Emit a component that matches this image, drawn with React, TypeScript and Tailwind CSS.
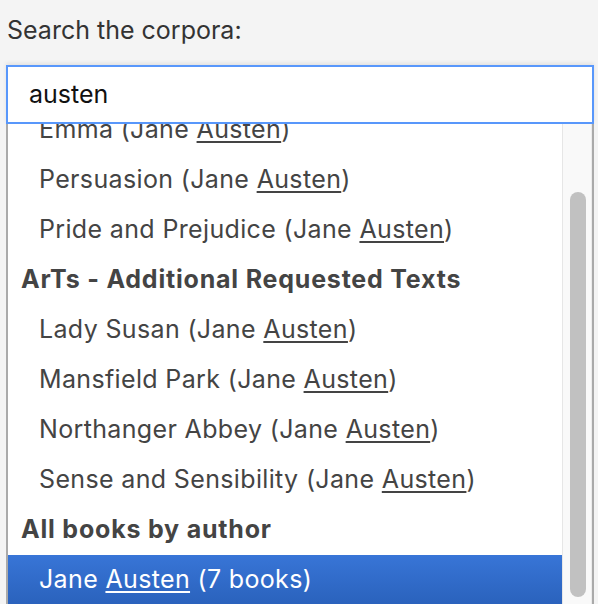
import React from 'react';

type Row = { kind: 'group' | 'item'; before?: string; match?: string; after?: string; label?: string; active?: boolean };

const rows: Row[] = [
  { kind: 'item', before: 'Emma (Jane ', match: 'Austen', after: ')' },
  { kind: 'item', before: 'Persuasion (Jane ', match: 'Austen', after: ')' },
  { kind: 'item', before: 'Pride and Prejudice (Jane ', match: 'Austen', after: ')' },
  { kind: 'group', label: 'ArTs - Additional Requested Texts' },
  { kind: 'item', before: 'Lady Susan (Jane ', match: 'Austen', after: ')' },
  { kind: 'item', before: 'Mansfield Park (Jane ', match: 'Austen', after: ')' },
  { kind: 'item', before: 'Northanger Abbey (Jane ', match: 'Austen', after: ')' },
  { kind: 'item', before: 'Sense and Sensibility (Jane ', match: 'Austen', after: ')' },
  { kind: 'group', label: 'All books by author' },
  { kind: 'item', before: 'Jane ', match: 'Austen', after: ' (7 books)', active: true },
];

const ResultRow: React.FC<{ row: Row }> = ({ row }) => {
  if (row.kind === 'group') {
    return (
      <li className="h-[50px] flex items-center pl-[13px] font-bold text-[#444] tracking-[0.8px]">
        {row.label}
      </li>
    );
  }
  return (
    <li
      className={
        row.active
          ? 'h-[50px] flex items-center pl-[31px] tracking-[0.35px] text-white bg-gradient-to-b from-[#3875d7] to-[#2a62bc]'
          : 'h-[50px] flex items-center pl-[31px] tracking-[0.35px] text-[#444]'
      }
    >
      <span>
        {row.before}
        <span className="underline underline-offset-[3px] decoration-[1.5px]">{row.match}</span>
        {row.after}
      </span>
    </li>
  );
};

export default function App() {
  return (
    <div className="h-[604px] overflow-hidden bg-[#f4f4f4] font-['Inter',sans-serif] text-[25px]">
      <div className="pl-[7px] pt-[15px] h-[65px] text-[#333] leading-[30px]">Search the corpora:</div>
      <div className="ml-[6px] w-[588px]">
        <div className="h-[59px] border-2 border-[#5897fb] bg-white flex items-center pl-[21px] text-[#111] shadow-[0_-2px_4px_rgba(0,0,0,0.08)]">
          austen
        </div>
        <div className="flex h-[481px] border-x-2 border-[#aaa] bg-white">
          <div className="flex-1 overflow-hidden">
            <ul className="-mt-[19px]">
              {rows.map((r, i) => (
                <ResultRow key={i} row={r} />
              ))}
            </ul>
          </div>
          <div className="w-[30px] flex-none bg-[#f9f9f9] border-l border-[#e6e6e6] border-r border-r-[#ececec] pl-[7px] pt-[68px]">
            <div className="w-[16px] h-[405px] rounded-full bg-[#c1c1c1]" />
          </div>
        </div>
      </div>
    </div>
  );
}
